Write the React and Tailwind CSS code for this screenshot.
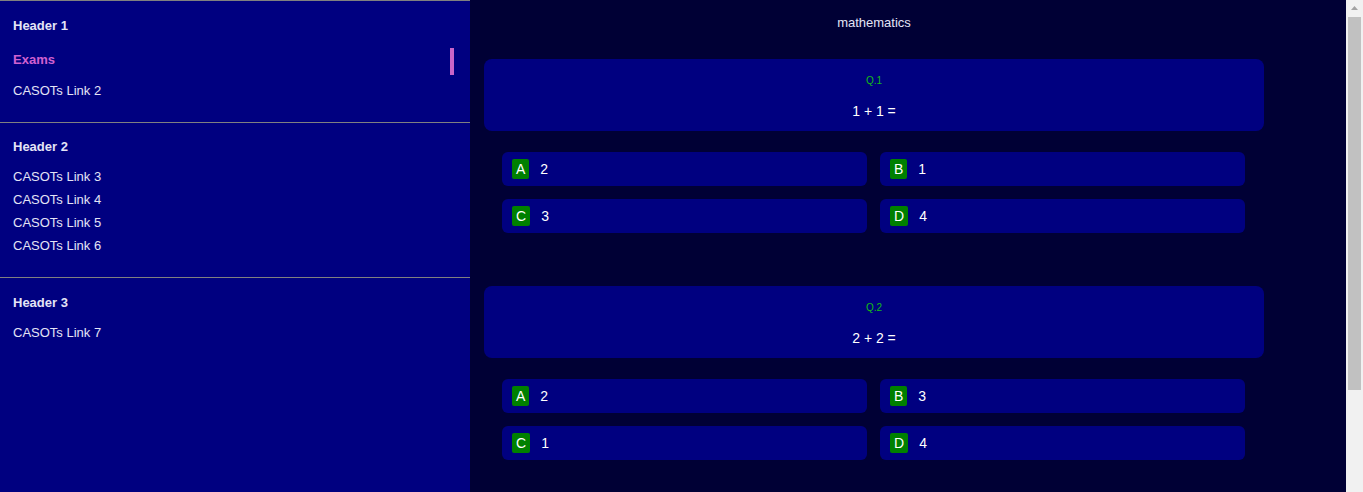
const sections = [
  { title: "Header 1", links: ["Exams", "CASOTs Link 2"], active: "Exams", top: "pt-[16px]", list: "mt-[13px] gap-[4px]" },
  { title: "Header 2", links: ["CASOTs Link 3", "CASOTs Link 4", "CASOTs Link 5", "CASOTs Link 6"], top: "pt-[15px]", list: "mt-[9px]" },
  { title: "Header 3", links: ["CASOTs Link 7"], top: "pt-[16px]", list: "mt-[9px]" },
];

const questions = [
  { n: 1, text: "1 + 1 =", options: [["A", "2"], ["B", "1"], ["C", "3"], ["D", "4"]] },
  { n: 2, text: "2 + 2 =", options: [["A", "2"], ["B", "3"], ["C", "1"], ["D", "4"]] },
];

function SidebarSection({ s }) {
  return (
    <div className={`border-t border-[#808080] ${s.top} pb-[20px]`}>
      <div className="px-[13px] h-[18px] leading-[18px] font-bold text-[13px] text-[#e4e4f6]">{s.title}</div>
      <div className={`${s.list} flex flex-col`}>
        {s.links.map((l) =>
          l === s.active ? (
            <div key={l} className="flex items-center justify-between h-[27px] pl-[13px] pr-[16px]">
              <span className="text-[13px] font-bold text-[#d060d0] -mt-[3px]">{l}</span>
              <span className="w-[4px] h-[27px] bg-[#c864c8]" />
            </div>
          ) : (
            <div key={l} className="px-[13px] h-[23px] leading-[23px] text-[13px] text-[#e4e4f6]">
              {l}
            </div>
          )
        )}
      </div>
    </div>
  );
}

function Question({ q }) {
  return (
    <div className="mb-[53px]">
      <div className="h-[72px] rounded-[8px] bg-[#000080] flex flex-col items-center">
        <div className="mt-[15px] text-[10px] leading-[14px] text-[#14bb14]">Q.{q.n}</div>
        <div className="mt-[14px] text-[14px] leading-[18px] text-white">{q.text}</div>
      </div>
      <div className="mt-[21px] pl-[18px] pr-[19px] grid grid-cols-2 gap-[13px]">
        {q.options.map(([k, v]) => (
          <div key={k} className="h-[34px] rounded-[6px] bg-[#000080] flex items-center pl-[10px]">
            <span className="h-[20px] leading-[20px] px-[4px] rounded-[2px] bg-[#008000] text-[14px] text-white">{k}</span>
            <span className="ml-[11px] text-[14px] text-white">{v}</span>
          </div>
        ))}
      </div>
    </div>
  );
}

export default function App() {
  return (
    <div className="flex h-[492px] overflow-hidden font-['Liberation_Sans',Arial,sans-serif]">
      <aside className="w-[470px] shrink-0 bg-[#000080]">
        {sections.map((s) => (
          <SidebarSection key={s.title} s={s} />
        ))}
      </aside>
      <main className="flex-1 bg-[#000035] pl-[14px]">
        <div className="w-[780px]">
          <div className="h-[45px] pt-[15px] text-center text-[13px] leading-[16px] text-[#e4e4f6]">mathematics</div>
          <div className="mt-[14px]">
            {questions.map((q) => (
              <Question key={q.n} q={q} />
            ))}
          </div>
        </div>
      </main>
      <div className="w-[17px] shrink-0 bg-[#f1f1f1] flex flex-col items-center">
        <svg width="9" height="17" viewBox="0 0 9 17">
          <path d="M4.5 6 L8 10 L1 10 Z" fill="#a3a3a3" />
        </svg>
        <div className="w-[13px] h-[373px] bg-[#c1c1c1]" />
      </div>
    </div>
  );
}
